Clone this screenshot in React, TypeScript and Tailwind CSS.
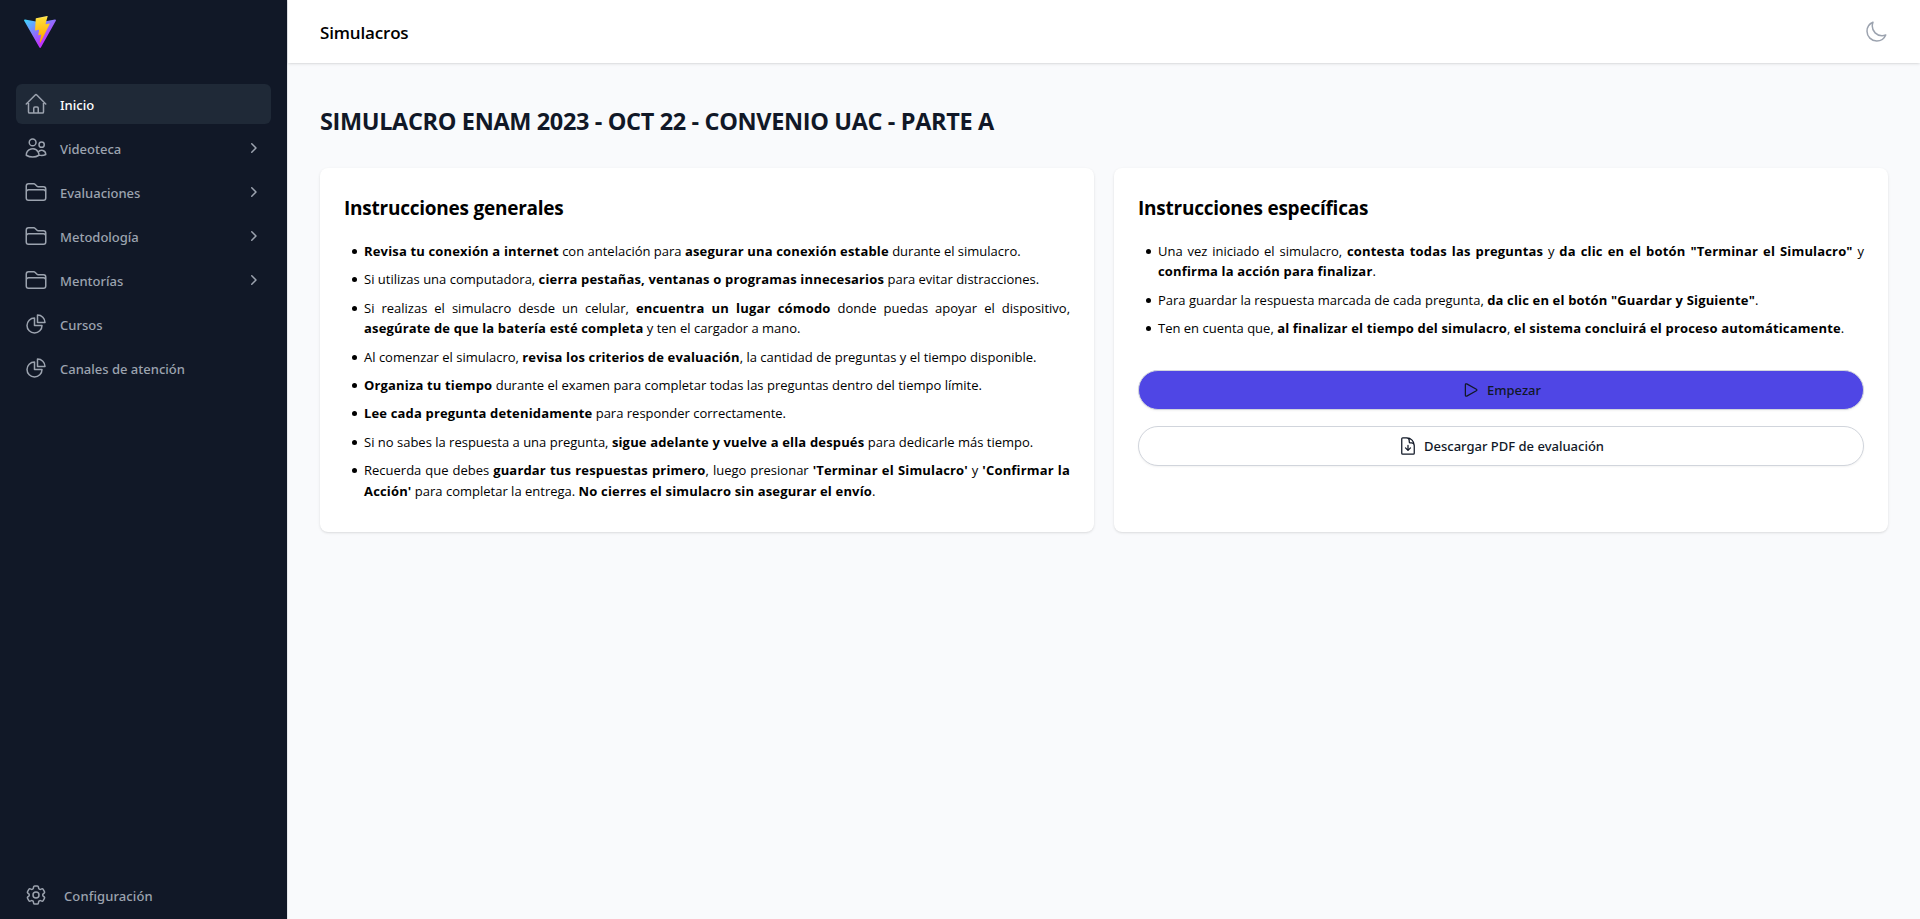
import type { ReactNode } from 'react';
import type { IconType } from 'react-icons';
import {
  HiMiniChevronRight,
  HiOutlineChartPie,
  HiOutlineCog6Tooth,
  HiOutlineDocumentArrowDown,
  HiOutlineFolder,
  HiOutlineHome,
  HiOutlineMoon,
  HiOutlinePlay,
  HiOutlineUsers,
} from 'react-icons/hi2';

type NavItem = { label: string; icon: IconType; active?: boolean; expandable?: boolean };

const navItems: NavItem[] = [
  { label: 'Inicio', icon: HiOutlineHome, active: true },
  { label: 'Videoteca', icon: HiOutlineUsers, expandable: true },
  { label: 'Evaluaciones', icon: HiOutlineFolder, expandable: true },
  { label: 'Metodología', icon: HiOutlineFolder, expandable: true },
  { label: 'Mentorías', icon: HiOutlineFolder, expandable: true },
  { label: 'Cursos', icon: HiOutlineChartPie },
  { label: 'Canales de atención', icon: HiOutlineChartPie },
];

function Logo() {
  return (
    <svg viewBox="0 0 256 257" className="size-8" aria-hidden="true">
      <defs>
        <linearGradient id="logo-base" x1="-.828%" x2="57.636%" y1="7.652%" y2="78.411%">
          <stop offset="0%" stopColor="#41D1FF" />
          <stop offset="100%" stopColor="#BD34FE" />
        </linearGradient>
        <linearGradient id="logo-bolt" x1="43.376%" x2="50.316%" y1="2.242%" y2="89.03%">
          <stop offset="0%" stopColor="#FFEA83" />
          <stop offset="8.333%" stopColor="#FFDD35" />
          <stop offset="100%" stopColor="#FFA800" />
        </linearGradient>
      </defs>
      <path
        fill="url(#logo-base)"
        d="M255.153 37.938L134.897 252.976c-2.483 4.44-8.862 4.466-11.382.048L.875 37.958c-2.746-4.814 1.371-10.646 6.827-9.67l120.385 21.517a6.537 6.537 0 0 0 2.322-.004l117.867-21.483c5.438-.991 9.574 4.796 6.877 9.62Z"
      />
      <path
        fill="url(#logo-bolt)"
        d="M185.432.063L96.44 17.501a3.268 3.268 0 0 0-2.634 3.014l-5.474 92.456a3.268 3.268 0 0 0 3.997 3.378l24.777-5.718c2.318-.535 4.413 1.507 3.936 3.838l-7.361 36.047c-.495 2.426 1.782 4.5 4.152 3.781l15.304-4.649c2.372-.72 4.652 1.36 4.15 3.788l-11.698 56.621c-.732 3.542 3.979 5.473 5.943 2.437l1.313-2.028l72.516-144.72c1.215-2.423-.88-5.186-3.54-4.672l-25.505 4.922c-2.396.462-4.435-1.77-3.759-4.114l16.646-57.705c.677-2.35-1.37-4.583-3.769-4.113Z"
      />
    </svg>
  );
}

function B({ children }: { children: ReactNode }) {
  return <strong className="font-bold tracking-[0.16px]">{children}</strong>;
}

function Sidebar() {
  return (
    <aside className="flex w-72 shrink-0 flex-col border-r border-gray-200 bg-[#111827] px-4 pt-4 font-['Noto_Sans',sans-serif] text-[13px] font-medium text-[#9ca3af]">
      <div className="flex h-8 items-center px-2">
        <Logo />
      </div>
      <nav className="mt-9 flex flex-1 flex-col gap-1">
        {navItems.map(({ label, icon: Icon, active, expandable }) => (
          <a
            key={label}
            href="#"
            className={
              active
                ? 'flex h-10 items-center gap-3 rounded-md bg-[#1f2937] px-2'
                : 'flex h-10 items-center gap-3 rounded-md px-2'
            }
          >
            <Icon className="size-6 shrink-0" />
            <span className={active ? 'flex-1 pt-[3px] text-white' : 'flex-1 pt-[3px]'}>{label}</span>
            {expandable && <HiMiniChevronRight className="size-5" />}
          </a>
        ))}
      </nav>
      <a href="#" className="mb-1 flex h-10 items-center gap-4 px-2">
        <HiOutlineCog6Tooth className="size-6" />
        <span className="pt-[3px] tracking-[0.1px]">Configuración</span>
      </a>
    </aside>
  );
}

function Card({ title, children }: { title: string; children: ReactNode }) {
  return (
    <section className="rounded-lg bg-white px-6 pt-[26px] pb-[23px] shadow-[0_1px_3px_0_rgba(0,0,0,0.1),0_1px_2px_-1px_rgba(0,0,0,0.1)]">
      <h2 className="mb-[19px] text-[19px] leading-7 font-bold tracking-[-0.24px]">{title}</h2>
      {children}
    </section>
  );
}

function List({ items }: { items: ReactNode[] }) {
  return (
    <ul className="pl-2 text-justify text-[13px] leading-[20.4px]">
      {items.map((item, index) => (
        <li key={index} className="mb-2 flex gap-[7px]">
          <span className="mt-2 size-[5px] shrink-0 rounded-full bg-black" />
          <p className="flex-1">{item}</p>
        </li>
      ))}
    </ul>
  );
}

const generalItems: ReactNode[] = [
  <><B>Revisa tu conexión a internet</B> con antelación para <B>asegurar una conexión estable</B> durante el simulacro.</>,
  <>Si utilizas una computadora, <B>cierra pestañas, ventanas o programas innecesarios</B> para evitar distracciones.</>,
  <>Si realizas el simulacro desde un celular, <B>encuentra un lugar cómodo</B> donde puedas apoyar el dispositivo, <B>asegúrate de que la batería esté completa</B> y ten el cargador a mano.</>,
  <>Al comenzar el simulacro, <B>revisa los criterios de evaluación</B>, la cantidad de preguntas y el tiempo disponible.</>,
  <><B>Organiza tu tiempo</B> durante el examen para completar todas las preguntas dentro del tiempo límite.</>,
  <><B>Lee cada pregunta detenidamente</B> para responder correctamente.</>,
  <>Si no sabes la respuesta a una pregunta, <B>sigue adelante y vuelve a ella después</B> para dedicarle más tiempo.</>,
  <>Recuerda que debes <B>guardar tus respuestas primero</B>, luego presionar <B>'Terminar el Simulacro'</B> y <B>'Confirmar la Acción'</B> para completar la entrega. <B>No cierres el simulacro sin asegurar el envío</B>.</>,
];

const specificItems: ReactNode[] = [
  <>Una vez iniciado el simulacro, <B>contesta todas las preguntas</B> y <B>da clic en el botón "Terminar el Simulacro"</B> y <B>confirma la acción para finalizar</B>.</>,
  <>Para guardar la respuesta marcada de cada pregunta, <B>da clic en el botón "Guardar y Siguiente"</B>.</>,
  <>Ten en cuenta que, <B>al finalizar el tiempo del simulacro</B>, <B>el sistema concluirá el proceso automáticamente</B>.</>,
];

export default function App() {
  return (
    <div className="flex h-screen overflow-hidden bg-[#f9fafc] font-['Open_Sans','Noto_Sans',sans-serif] text-black">
      <Sidebar />
      <div className="flex min-w-0 flex-1 flex-col">
        <header className="flex h-[63px] shrink-0 items-center justify-between bg-white px-8 shadow-[0_1px_3px_0_rgba(0,0,0,0.1),0_1px_2px_-1px_rgba(0,0,0,0.1)]">
          <h1 className="pt-0.5 text-[17px] font-semibold tracking-[-0.17px]">Simulacros</h1>
          <HiOutlineMoon className="size-6 text-[#9ca3af]" />
        </header>
        <main className="flex flex-col px-8 pt-[42px]">
          <h2 className="text-[23.5px] leading-8 font-bold tracking-[-0.36px] text-[#111827]">
            SIMULACRO ENAM 2023 - OCT 22 - CONVENIO UAC - PARTE A
          </h2>
          <div className="mt-[31px] grid grid-cols-2 gap-5">
            <Card title="Instrucciones generales">
              <List items={generalItems} />
            </Card>
            <Card title="Instrucciones específicas">
              <List items={specificItems} />
              <div className="mt-[31px] flex flex-col gap-4 font-['Noto_Sans',sans-serif] text-[13px] font-medium text-[#111827]">
                <button className="flex h-10 items-center justify-center gap-1.5 rounded-full border border-gray-300 bg-[#4f46e5] shadow-xs">
                  <HiOutlinePlay className="size-5" />
                  <span className="pt-0.5">Empezar</span>
                </button>
                <button className="flex h-10 items-center justify-center gap-1.5 rounded-full border border-gray-300 bg-white shadow-xs">
                  <HiOutlineDocumentArrowDown className="size-5" />
                  <span className="pt-0.5">Descargar PDF de evaluación</span>
                </button>
              </div>
            </Card>
          </div>
        </main>
      </div>
    </div>
  );
}
